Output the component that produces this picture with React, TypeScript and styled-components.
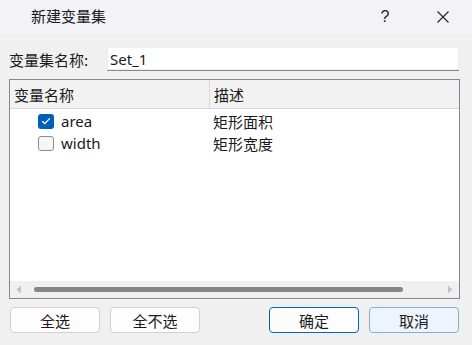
import React from "react";
import styled, { createGlobalStyle } from "styled-components";

const Global = createGlobalStyle`
  html, body { margin: 0; padding: 0; background: #f0f0f0; }
  body { font-family: "Noto Sans", "Noto Sans CJK SC", sans-serif; }
  * { box-sizing: border-box; }
`;

const CJK = `"Noto Sans CJK SC", "Noto Sans", sans-serif`;
const LAT = `"Noto Sans", "Noto Sans CJK SC", sans-serif`;

const Window = styled.div`
  width: 472px;
  height: 345px;
  display: flex;
  flex-direction: column;
  background: #f0f0f0;
  overflow: hidden;
`;

const TitleBar = styled.div`
  height: 33px;
  flex: none;
  display: flex;
  align-items: center;
  background: #f3f3f7;
  padding-left: 31px;
`;

const TitleText = styled.div`
  flex: 1;
  font-family: ${CJK};
  font-size: 15px;
  color: #1a1a1a;
  line-height: 1;
  margin-top: -3px;
`;

const TitleButton = styled.div`
  width: 58px;
  height: 33px;
  display: flex;
  align-items: center;
  justify-content: center;
  font-family: "Liberation Sans", sans-serif;
  font-size: 16px;
  color: #222;
`;

const Body = styled.div`
  flex: 1;
  display: flex;
  flex-direction: column;
  padding: 14px 12px 0 9px;
`;

const NameRow = styled.div`
  display: flex;
  align-items: center;
  height: 24px;
`;

const Label = styled.div`
  width: 98px;
  font-family: ${CJK};
  font-size: 15px;
  color: #1a1a1a;
`;

const TextInput = styled.div`
  flex: 1;
  height: 24px;
  background: #fff;
  border-bottom: 1px solid #8a8a8a;
  box-shadow: inset 0 0 0 1px #ececec;
  display: flex;
  align-items: center;
  padding-left: 3px;
  margin-right: 1px;
  font-family: ${LAT};
  font-size: 15px;
  color: #1a1a1a;
`;

const Table = styled.div`
  margin-top: 8px;
  height: 220px;
  border: 1px solid #828790;
  background: #fff;
  display: flex;
  flex-direction: column;
`;

const Header = styled.div`
  height: 29px;
  flex: none;
  display: grid;
  grid-template-columns: 200px 1fr;
  background: #f2f2f2;
  border-bottom: 1px solid #d6d6d6;
`;

const HeaderCell = styled.div<{ $divider?: boolean }>`
  display: flex;
  align-items: center;
  padding-left: 4px;
  border-right: ${(p) => (p.$divider ? "1px solid #d6d6d6" : "none")};
  font-family: ${CJK};
  font-size: 15px;
  color: #1a1a1a;
`;

const Rows = styled.div`
  flex: 1;
  display: flex;
  flex-direction: column;
  padding-top: 1px;
`;

const Row = styled.div`
  height: 22px;
  display: grid;
  grid-template-columns: 203px 1fr;
  align-items: center;
`;

const NameCell = styled.div`
  display: flex;
  align-items: center;
  padding-left: 28px;
  gap: 7px;
  font-family: ${LAT};
  font-size: 15px;
  color: #1a1a1a;
`;

const DescCell = styled.div`
  font-family: ${CJK};
  font-size: 15px;
  color: #1a1a1a;
`;

const Box = styled.div<{ $checked?: boolean }>`
  width: 16px;
  height: 15px;
  border-radius: 3px;
  background: ${(p) => (p.$checked ? "#005fb8" : "#f6f6f6")};
  border: ${(p) => (p.$checked ? "none" : "1px solid #8b8b8b")};
  display: flex;
  align-items: center;
  justify-content: center;
`;

const ScrollBar = styled.div`
  height: 17px;
  flex: none;
  background: #f0f0f0;
  display: flex;
  align-items: center;
  padding: 0 6px;
  gap: 6px;
`;

const Thumb = styled.div`
  height: 5px;
  border-radius: 3px;
  background: #858585;
  width: 369px;
  margin-left: 6px;
`;

const Spacer = styled.div`
  flex: 1;
`;

const ButtonRow = styled.div`
  margin-top: 8px;
  display: flex;
  padding: 0 1px;
  gap: 10px;
`;

const Button = styled.div<{ $variant?: "default" | "primary" | "hover" }>`
  width: 90px;
  height: 26px;
  border-radius: 4px;
  display: flex;
  align-items: center;
  justify-content: center;
  font-family: ${CJK};
  font-size: 15px;
  color: #1a1a1a;
  background: ${(p) => (p.$variant === "hover" ? "#eef4fb" : "#fdfdfd")};
  border: 1px solid
    ${(p) =>
      p.$variant === "primary"
        ? "#0067c0"
        : p.$variant === "hover"
        ? "#7fb0dd"
        : "#d0d0d0"};
`;

const Arrow = ({ dir }: { dir: "left" | "right" }) => (
  <svg width="6" height="9" viewBox="0 0 6 9">
    {dir === "left" ? (
      <path d="M5 0.5 L0.5 4.5 L5 8.5 Z" fill="#c2c2c2" />
    ) : (
      <path d="M1 0.5 L5.5 4.5 L1 8.5 Z" fill="#c2c2c2" />
    )}
  </svg>
);

const Check = () => (
  <svg width="10" height="8" viewBox="0 0 10 8">
    <path d="M1.2 4.2 L3.8 6.6 L8.8 1.4" stroke="#fff" strokeWidth="1.3" fill="none" />
  </svg>
);

const data = [
  { name: "area", desc: "矩形面积", checked: true },
  { name: "width", desc: "矩形宽度", checked: false },
];

export default function App() {
  return (
    <Window>
      <Global />
      <TitleBar>
        <TitleText>新建变量集</TitleText>
        <TitleButton>?</TitleButton>
        <TitleButton>
          <svg width="14" height="14" viewBox="0 0 14 14">
            <path d="M1.5 1.5 L12.5 12.5 M12.5 1.5 L1.5 12.5" stroke="#222" strokeWidth="1.1" />
          </svg>
        </TitleButton>
      </TitleBar>
      <Body>
        <NameRow>
          <Label>变量集名称:</Label>
          <TextInput>Set_1</TextInput>
        </NameRow>
        <Table>
          <Header>
            <HeaderCell $divider>变量名称</HeaderCell>
            <HeaderCell>描述</HeaderCell>
          </Header>
          <Rows>
            {data.map((d) => (
              <Row key={d.name}>
                <NameCell>
                  <Box $checked={d.checked}>{d.checked && <Check />}</Box>
                  {d.name}
                </NameCell>
                <DescCell>{d.desc}</DescCell>
              </Row>
            ))}
          </Rows>
          <ScrollBar>
            <Arrow dir="left" />
            <Thumb />
            <Spacer />
            <Arrow dir="right" />
          </ScrollBar>
        </Table>
        <ButtonRow>
          <Button>全选</Button>
          <Button>全不选</Button>
          <Spacer />
          <Button $variant="primary">确定</Button>
          <Button $variant="hover">取消</Button>
        </ButtonRow>
      </Body>
    </Window>
  );
}
